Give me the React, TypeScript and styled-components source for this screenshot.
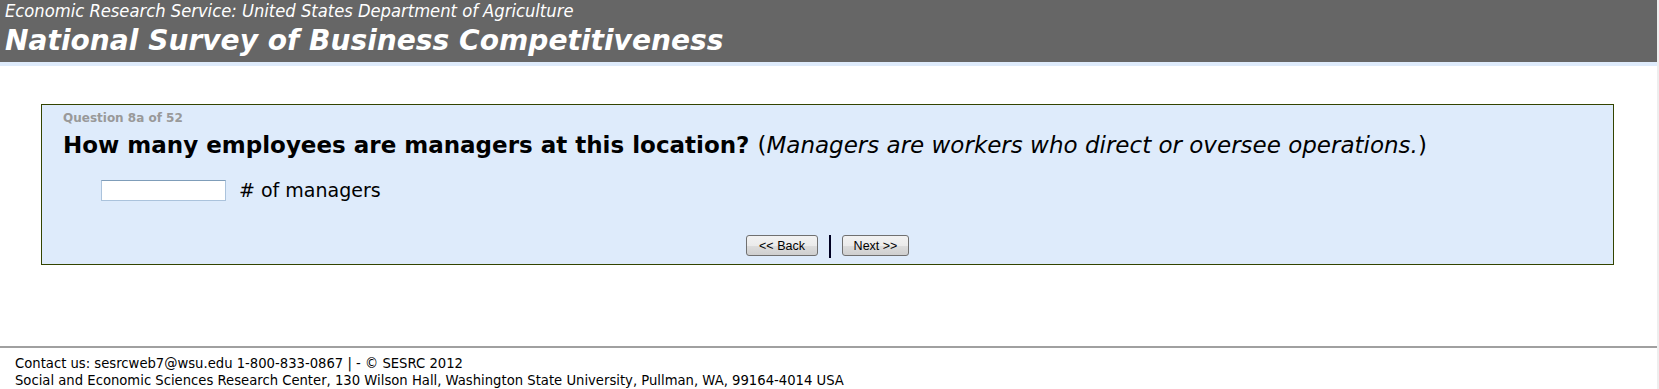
import React from "react";
import styled, { createGlobalStyle } from "styled-components";

const GlobalStyle = createGlobalStyle`
  html, body {
    margin: 0;
    padding: 0;
    background: #eeeeee;
  }
  body {
    font-family: "DejaVu Sans", Verdana, sans-serif;
    color: #000;
  }
`;

const Page = styled.div`
  width: calc(100vw - 2px);
  height: 389px;
  background: #ffffff;
  display: flex;
  flex-direction: column;
`;

const Header = styled.header`
  box-sizing: border-box;
  height: 66px;
  background: #666666;
  border-bottom: 4px solid #deebfb;
  padding-left: 5px;
  color: #ffffff;
  font-style: italic;
`;

const Agency = styled.div`
  font-family: "DejaVu Sans Condensed", "DejaVu Sans", Tahoma, sans-serif;
  font-size: 18.2px;
  line-height: 22px;
`;

const Title = styled.h1`
  margin: 2px 0 0;
  font-family: "DejaVu Sans", Verdana, sans-serif;
  font-size: 28.1px;
  line-height: 33px;
  font-weight: bold;
`;

const Main = styled.main`
  padding: 38px 43px 0 41px;
  flex: 1;
`;

const QuestionBox = styled.section`
  box-sizing: border-box;
  height: 161px;
  background: #deebfb;
  border: 1px solid #334400;
  padding: 6px 21px 0;
  display: flex;
  flex-direction: column;
`;

const Counter = styled.div`
  color: #999999;
  font-size: 12px;
  font-weight: bold;
  line-height: 15px;
`;

const QuestionText = styled.h2`
  margin: 4px 0 0;
  font-size: 23px;
  line-height: 30px;
  font-weight: bold;
`;

const Note = styled.span`
  font-weight: normal;
  em {
    font-style: italic;
  }
`;

const AnswerRow = styled.div`
  display: flex;
  align-items: center;
  gap: 13px;
  height: 22px;
  margin: 19px 0 0 38px;
  font-size: 19px;
`;

const NumberInput = styled.input`
  box-sizing: border-box;
  width: 125px;
  height: 21px;
  border: 1px solid #abc3dc;
  border-top-color: #7f9db9;
  background: #ffffff;
  padding: 0 3px;
  font-size: 13px;
`;

const NavRow = styled.div`
  display: flex;
  justify-content: center;
  align-items: flex-start;
  gap: 11px;
  margin-top: 34px;
`;

const NavButton = styled.button<{ $w: number }>`
  box-sizing: border-box;
  width: ${(p) => p.$w}px;
  height: 21px;
  padding: 0;
  border: 1px solid #707070;
  border-radius: 3px;
  background: linear-gradient(#f2f2f2 0%, #ebebeb 50%, #dddddd 51%, #cfcfcf 100%);
  font-family: "Liberation Sans", Arial, sans-serif;
  font-size: 12.5px;
  color: #000;
`;

const Divider = styled.span`
  width: 2px;
  height: 23px;
  background: #000022;
`;

const Footer = styled.footer`
  box-sizing: border-box;
  height: 43px;
  border-top: 2px solid #a0a0a0;
  padding: 7px 15px 0;
  font-family: "DejaVu Sans", Tahoma, sans-serif;
  font-size: 13.2px;
  line-height: 17px;
`;

export default function App() {
  return (
    <>
      <GlobalStyle />
      <Page>
        <Header>
          <Agency>Economic Research Service: United States Department of Agriculture</Agency>
          <Title>National Survey of Business Competitiveness</Title>
        </Header>
        <Main>
          <QuestionBox>
            <Counter>Question 8a of 52</Counter>
            <QuestionText>
              How many employees are managers at this location?{" "}
              <Note>
                (<em>Managers are workers who direct or oversee operations.</em>)
              </Note>
            </QuestionText>
            <AnswerRow>
              <NumberInput type="text" aria-label="number of managers" />
              <span># of managers</span>
            </AnswerRow>
            <NavRow>
              <NavButton $w={72}>&lt;&lt; Back</NavButton>
              <Divider />
              <NavButton $w={67}>Next &gt;&gt;</NavButton>
            </NavRow>
          </QuestionBox>
        </Main>
        <Footer>
          <div>Contact us: sesrcweb7@wsu.edu 1-800-833-0867 | - © SESRC 2012</div>
          <div>
            Social and Economic Sciences Research Center, 130 Wilson Hall, Washington State University,
            Pullman, WA, 99164-4014 USA
          </div>
        </Footer>
      </Page>
    </>
  );
}
